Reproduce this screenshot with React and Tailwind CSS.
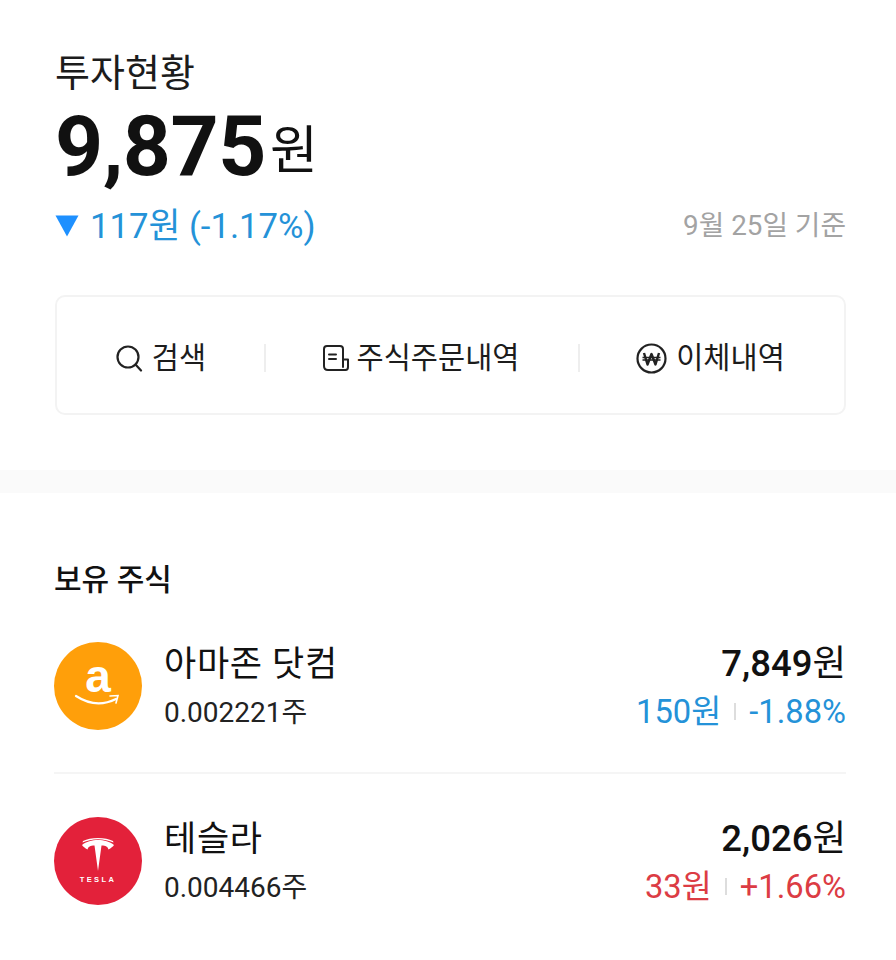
const font = { fontFamily: 'Roboto, "Noto Sans CJK KR", sans-serif' };

function SearchIcon() {
  return (
    <svg width="28" height="28" viewBox="0 0 28 28" fill="none" stroke="#222" strokeWidth="2.2">
      <circle cx="13" cy="13" r="10.5" />
      <path d="M20.5 20.5 L26 26.5" strokeLinecap="round" />
    </svg>
  );
}

function DocIcon() {
  return (
    <svg width="28" height="28" viewBox="0 0 28 28" fill="none" stroke="#222" strokeWidth="2" strokeLinecap="round" strokeLinejoin="round">
      <path d="M21 23 V5 Q21 2 18 2 H5 Q2 2 2 5 V22 Q2 26 6 26 H23.5 Q26 26 26 23 V15.5 H21" />
      <path d="M7 10.5 H14 M7 15 H14" />
    </svg>
  );
}

function WonIcon() {
  return (
    <svg width="31" height="31" viewBox="0 0 31 31" fill="none" stroke="#222">
      <circle cx="15.5" cy="15.5" r="14" strokeWidth="2.2" />
      <path d="M8 10 L11.5 21.5 L15.5 11 L19.5 21.5 L23 10" strokeWidth="2.4" strokeLinejoin="round" />
      <path d="M6.5 14.5 H24.5 M6.5 17 H24.5" strokeWidth="1.6" />
    </svg>
  );
}

function AmazonLogo() {
  return (
    <div className="relative w-[88px] h-[88px] rounded-full bg-[#ff9f0a] shrink-0 flex flex-col items-center overflow-hidden">
      <span className="text-white font-bold text-[46px] leading-none mt-[11px]" style={{ fontFamily: '"Liberation Sans", sans-serif' }}>a</span>
      <svg className="absolute left-[20px] top-[50px]" width="48" height="18" viewBox="0 0 48 18" fill="none">
        <path d="M2 4 Q22 17 42 7" stroke="#fff" strokeWidth="2.2" strokeLinecap="round" />
        <path d="M36 4 L44 3.5 L42 11" stroke="#fff" strokeWidth="1.6" fill="none" strokeLinecap="round" />
      </svg>
    </div>
  );
}

function TeslaLogo() {
  return (
    <div className="w-[88px] h-[88px] rounded-full bg-[#e3213a] shrink-0 flex flex-col items-center">
      <svg className="mt-[21px]" width="32" height="33" viewBox="0 0 32 33" fill="#fff">
        <path d="M16 33 L19.5 7.5 C24 7.5 25.5 8.5 26.5 11.5 C29 10 31 8.5 32 7 C28 3.5 22 2 16 2 C10 2 4 3.5 0 7 C1 8.5 3 10 5.5 11.5 C6.5 8.5 8 7.5 12.5 7.5 Z" />
        <path d="M16 0 C22 0 27 1 31 3 L31.5 4.5 C27 2.5 21.5 1.2 16 1.2 C10.5 1.2 5 2.5 0.5 4.5 L1 3 C5 1 10 0 16 0 Z" />
      </svg>
      <span className="text-white text-[7.5px] font-bold tracking-[2.4px] leading-none mt-[5px]" style={{ fontFamily: '"Liberation Sans", sans-serif' }}>TESLA</span>
    </div>
  );
}

function Stock({ logo, name, qty, price, change, pct, color }) {
  return (
    <div className="flex items-center h-[88px]">
      {logo}
      <div className="ml-[22px] flex-1 pb-[1px]">
        <div className="text-[35px] leading-[46px] text-[#111] tracking-[0.7px]">{name}</div>
        <div className="text-[28px] leading-[34px] text-[#222] mt-[8px]">{qty}</div>
      </div>
      <div className="flex flex-col items-end pb-[1px]">
        <div className="text-[36.5px] leading-[46px] text-[#111] font-medium">
          {price}<span className="font-normal">원</span>
        </div>
        <div className={`flex items-center text-[32.7px] leading-[38px] mt-[6px] ${color}`}>
          <span>{change}</span>
          <span className="w-[2px] h-[17px] bg-[#ddd] mx-[13px]" />
          <span>{pct}</span>
        </div>
      </div>
    </div>
  );
}

export default function App() {
  return (
    <div className="w-[896px] h-[960px] bg-white overflow-hidden" style={font}>
      <div className="pl-[55px] pr-[50px] pt-[50px] h-[470px]">
        <div className="text-[38px] leading-[46px] text-[#1c1c1c]">투자현황</div>
        <div className="flex items-baseline mt-[5px] h-[92px]">
          <span className="text-[84px] leading-[92px] font-bold text-[#111] tracking-[-0.5px]">9,875</span>
          <span className="text-[52px] leading-[92px] text-[#111] ml-[4px] -translate-y-[6px]">원</span>
        </div>
        <div className="flex items-center justify-between mt-[11px] h-[44px]">
          <div className="flex items-center text-[#2492d8] text-[34.7px]">
            <svg width="24" height="22" viewBox="0 0 24 22" className="mr-[11px]">
              <path d="M0.5 0.5 H23.5 L12 21.5 Z" fill="#1e90ff" />
            </svg>
            <span>117원 (-1.17%)</span>
          </div>
          <div className="text-[27.8px] text-[#a3a3a3]">9월 25일 기준</div>
        </div>
        <div className="mt-[47px] h-[120px] rounded-[10px] border-2 border-[#f3f3f3] flex items-center text-[#1c1c1c] text-[29.5px] pt-[6px]">
          <div className="w-[207px] flex items-center justify-center gap-[9px]">
            <SearchIcon />
            <span>검색</span>
          </div>
          <span className="w-[2px] h-[28px] bg-[#eee]" />
          <div className="w-[312px] flex items-center justify-center gap-[7px] pr-[3px]">
            <DocIcon />
            <span>주식주문내역</span>
          </div>
          <span className="w-[2px] h-[28px] bg-[#eee]" />
          <div className="flex-1 flex items-center justify-center gap-[9px] pr-[3px]">
            <WonIcon />
            <span>이체내역</span>
          </div>
        </div>
      </div>
      <div className="h-[23px] bg-[#fafafa]" />
      <div className="pl-[54px] pr-[50px]">
        <div className="text-[30px] leading-[40px] font-medium text-[#111] mt-[67px]">보유 주식</div>
        <div className="mt-[42px] pb-[42px] border-b-2 border-[#f5f5f5]">
          <Stock logo={<AmazonLogo />} name="아마존 닷컴" qty="0.002221주" price="7,849" change="150원" pct="-1.88%" color="text-[#2492d8]" />
        </div>
        <div className="mt-[43px]">
          <Stock logo={<TeslaLogo />} name="테슬라" qty="0.004466주" price="2,026" change="33원" pct="+1.66%" color="text-[#dc3c44]" />
        </div>
      </div>
    </div>
  );
}
